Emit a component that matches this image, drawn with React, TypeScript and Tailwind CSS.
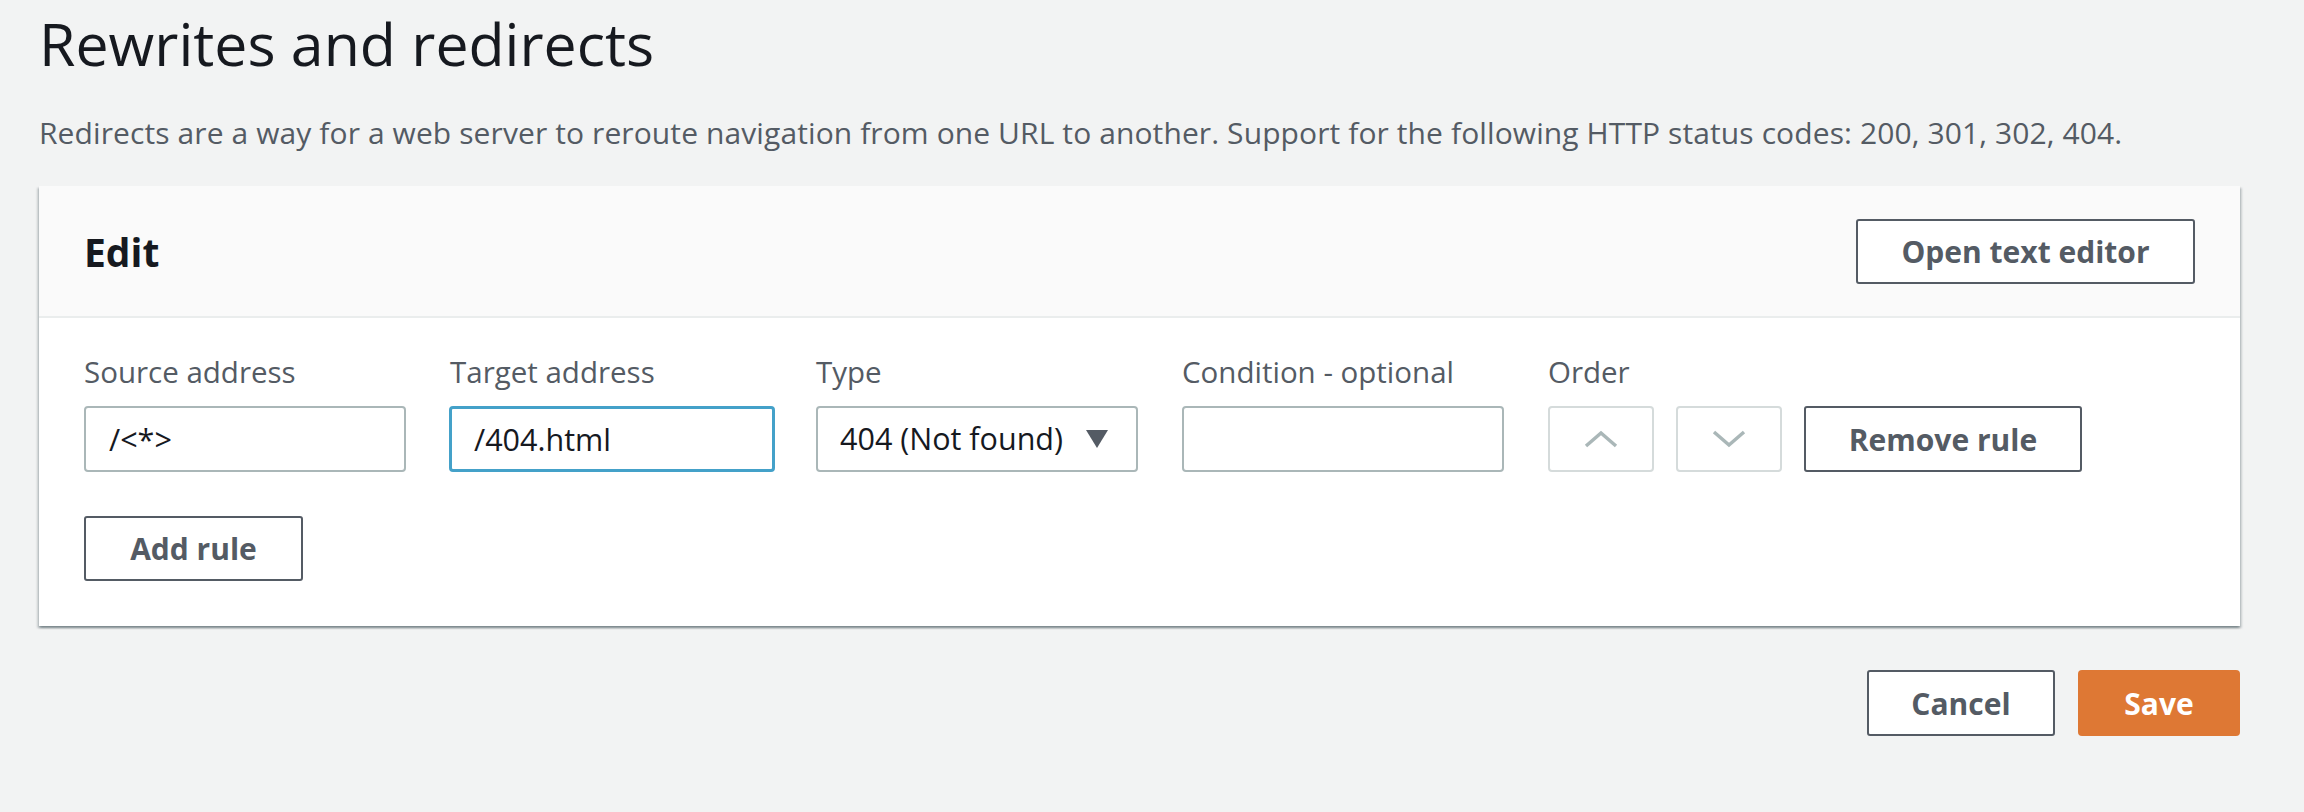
export default function App() {
  return (
    <div className="min-h-[812px] w-full bg-[#f2f3f3] px-[39px] pr-[64px] pt-[7px] font-['Open_Sans',sans-serif]">
      <h1 className="text-[59px] leading-[72px] text-[#16191f]">Rewrites and redirects</h1>
      <p className="mt-[34px] text-[30px] leading-[40px] tracking-[0.1px] text-[#545b64]">
        Redirects are a way for a web server to reroute navigation from one URL to another. Support for the following
        HTTP status codes: 200, 301, 302, 404.
      </p>

      <div className="mt-[33px] bg-white shadow-[0_2px_2px_0_rgba(0,28,36,0.3),2px_2px_2px_0_rgba(0,28,36,0.15),-2px_2px_2px_0_rgba(0,28,36,0.15)]">
        <div className="flex h-[132px] items-center justify-between border-b-2 border-[#eaeded] bg-[#fafafa] px-[45px]">
          <h2 className="text-[39px] font-bold leading-none text-[#16191f]">Edit</h2>
          <button className="h-[65px] w-[339px] rounded-[3px] border-2 border-[#545b64] bg-white text-[30px] font-bold text-[#545b64]">
            Open text editor
          </button>
        </div>

        <div className="px-[45px] pt-[34px] pb-[45px]">
          <div className="flex gap-[44px]">
            <Field label="Source address">
              <TextBox value="/<*>" />
            </Field>
            <Field label="Target address">
              <TextBox value="/404.html" focused />
            </Field>
            <Field label="Type">
              <div className="flex h-[66px] w-[322px] items-center justify-between rounded-[4px] border-2 border-[#aab7b8] bg-white pl-[22px] pr-[28px] text-[30.5px] text-[#16191f]">
                <span>404 (Not found)</span>
                <svg width="22" height="18" viewBox="0 0 22 18">
                  <polygon points="0,0 22,0 11,18" fill="#545b64" />
                </svg>
              </div>
            </Field>
            <Field label="Condition - optional">
              <TextBox value="" />
            </Field>
            <div className="flex flex-col">
              <label className="mb-[14px] text-[29.5px] leading-[40px] text-[#545b64]">Order</label>
              <div className="flex gap-[22px]">
                <button className="flex h-[66px] w-[106px] items-center justify-center rounded-[4px] border-2 border-[#d5dbdb] bg-white">
                  <svg width="34" height="18" viewBox="0 0 34 18">
                    <polyline points="2,16 17,3 32,16" fill="none" stroke="#aab7b8" strokeWidth="3.5" />
                  </svg>
                </button>
                <button className="flex h-[66px] w-[106px] items-center justify-center rounded-[4px] border-2 border-[#d5dbdb] bg-white">
                  <svg width="34" height="18" viewBox="0 0 34 18">
                    <polyline points="2,2 17,15 32,2" fill="none" stroke="#aab7b8" strokeWidth="3.5" />
                  </svg>
                </button>
                <button className="h-[66px] w-[278px] rounded-[3px] border-2 border-[#545b64] bg-white text-[30px] font-bold text-[#545b64]">
                  Remove rule
                </button>
              </div>
            </div>
          </div>

          <button className="mt-[44px] h-[65px] w-[219px] rounded-[3px] border-2 border-[#545b64] bg-white text-[30px] font-bold text-[#545b64]">
            Add rule
          </button>
        </div>
      </div>

      <div className="mt-[44px] flex justify-end gap-[23px]">
        <button className="h-[66px] w-[188px] rounded-[3px] border-2 border-[#545b64] bg-white text-[30px] font-bold text-[#545b64]">
          Cancel
        </button>
        <button className="h-[66px] w-[162px] rounded-[4px] bg-[#de7834] text-[30px] font-bold text-white">
          Save
        </button>
      </div>
    </div>
  )
}

function Field({ label, children }: { label: string; children: React.ReactNode }) {
  return (
    <div className="flex w-[322px] flex-col">
      <label className="mb-[14px] text-[29.5px] leading-[40px] text-[#545b64]">{label}</label>
      {children}
    </div>
  )
}

function TextBox({ value, focused }: { value: string; focused?: boolean }) {
  return (
    <input
      readOnly
      value={value}
      className={
        focused
          ? "h-[66px] w-[326px] -ml-px rounded-[4px] border-[3px] border-[#44a1c9] bg-white pl-[22px] text-[30.5px] text-[#16191f] outline-none"
          : "h-[66px] w-[322px] rounded-[4px] border-2 border-[#aab7b8] bg-white pl-[23px] text-[30.5px] text-[#16191f] outline-none"
      }
    />
  )
}
